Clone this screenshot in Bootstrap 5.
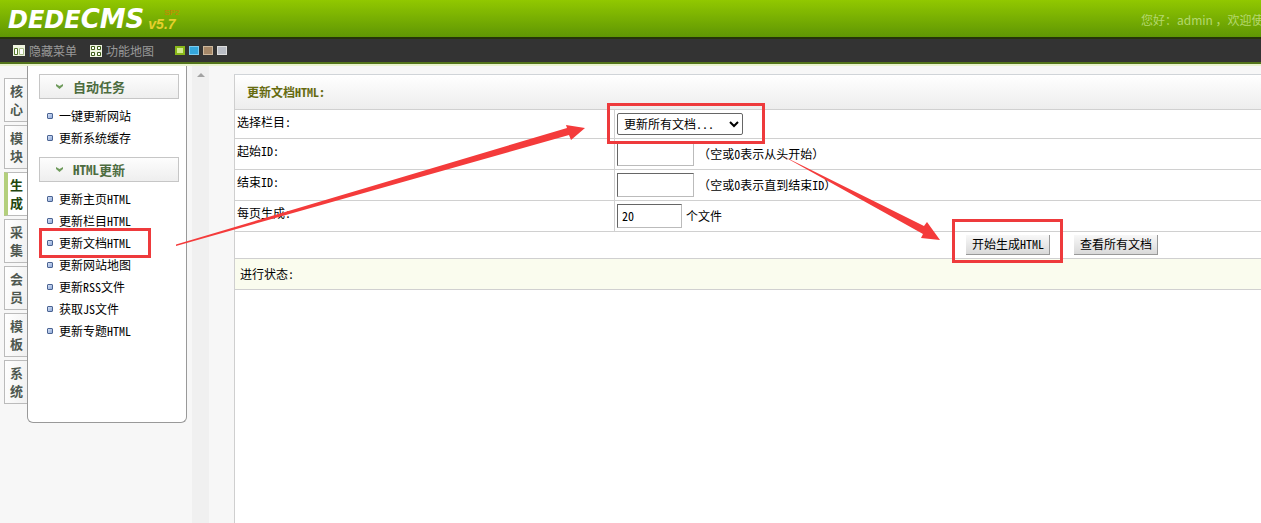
<!DOCTYPE html>
<html lang="zh-CN">
<head>
<meta charset="utf-8">
<meta name="viewport" content="width=device-width, initial-scale=1">
<title>DedeCMS - 更新文档HTML</title>
<link href="https://cdn.jsdelivr.net/npm/bootstrap@5.3.0/dist/css/bootstrap.min.css" rel="stylesheet">
<style>
body{font-family:"Noto Sans CJK SC",sans-serif;font-size:12px;line-height:18px;color:#000;background:#f7f7f7;font-feature-settings:"hwid";overflow:hidden}
button,input,select{font-feature-settings:inherit}
a{color:inherit;text-decoration:none}
.topbar{height:37px;background:linear-gradient(#91c800,#5f9604);padding-left:8px}
.brandmark{font-family:"DejaVu Sans",sans-serif;font-weight:700;font-style:italic;font-size:24px;line-height:38px;color:#fff;font-feature-settings:normal}
.brandmark b{font-size:26px}
.version{font-family:"Liberation Sans",sans-serif;font-weight:700;font-style:italic;font-size:14px;line-height:14px;color:#e6d02e;margin-left:4px;padding-top:8px;font-feature-settings:normal}
.version small{font-weight:400;font-style:normal;font-size:8px;line-height:9px;color:#d17c0a;padding-left:16px}
.greeting{width:120px;line-height:39px;color:#b5d86f;font-feature-settings:normal}
.toolstrip{height:27px;background:#333;border-top:2px solid #25330b;border-bottom:2px solid #53751b;padding-left:13px;color:#999;gap:13px}
.swatch{width:10px;height:9px;border:1px solid #ddd}
.glowline{height:2px;background:#eaf3cf}
.tabs{width:23px;margin-left:4px;padding-top:12px;gap:3px}
.tabs a{height:44px;border:1px solid #bbb;border-right:0;background:linear-gradient(100deg,#fff,#f0f0f0);font-size:13px;font-weight:700;color:#4f5850;padding:3px 5px 0 5px;text-align:center;word-break:break-all}
.tabs a.active{border-left:4px solid #b3cf7c;padding-left:2px;background:#fff;color:#22460d}
.menu{width:160px;height:357px;border:1px solid #999;border-top:0;border-radius:0 0 6px 6px;background:#fff;padding:8px 7px 0 11px}
.menu h2{height:25px;margin:0;border:1px solid #c6c6c6;background:linear-gradient(#fdfdfd,#eee);font-size:13px;line-height:22px;font-weight:700;color:#4d6c3f;padding-left:16px;gap:10px}
.menu ul{margin:0;padding:6px 0 8px 8px}
.menu li{height:22px;gap:6px}
.bullet{width:6px;height:6px;border:1px solid #4b6493;border-radius:1px;background:linear-gradient(135deg,#d8e3f6,#8fa9d8)}
.scrolltrack{width:17px;margin-left:5px;background:#f0f0f0;padding-top:7px}
.workspace{margin-left:25px;margin-top:8px;background:#fff;border-left:1px solid #cfcfcf;border-top:1px solid #d0d4d8}
.formgrid{width:100%;table-layout:fixed;border-collapse:collapse}
.caption-col{width:37%}
.formgrid th,.formgrid td{height:31px;border-bottom:1px solid #d0d0d0;padding:0 2px;font-weight:400}
.formgrid thead th{height:34px;background:linear-gradient(#fff,#ededed);font-weight:700;color:#666b10;padding-left:12px}
.formgrid th.caption{border-right:1px solid #d0d0d0;padding-bottom:6px}
.formgrid .pick th,.formgrid .pick td{height:29px}
.formgrid .pick th.caption{padding-bottom:3px}
.field{width:77px;height:24px;border:1px solid #bbb;border-top-color:#666;border-left-color:#666;padding:0 4px;font-size:12px}
.field-sm{width:65px}
.fullparen{font-feature-settings:normal}
.picker{width:126px;height:22px;border:1px solid #666;border-radius:2px;padding:0 2px;background:#fff;color:#000;font-size:12px}
.formgrid .actions td{height:27px;padding-right:10%}
.pushbtn{width:84px;height:20px;border:0;border-right:1px solid #999;border-bottom:1px solid #999;background:linear-gradient(#f8f8f8,#d9d9d9);padding:0;font-size:12px;line-height:18px;color:#000}
.formgrid .status td{background:#fafcee;padding-left:5px}
.marks{left:0;top:0;pointer-events:none}
</style>
<script src="https://cdn.jsdelivr.net/npm/bootstrap@5.3.0/dist/js/bootstrap.bundle.min.js"></script>
</head>
<body class="d-flex flex-column vh-100 position-relative">
<header>
  <div class="topbar d-flex justify-content-between">
    <a href="#" class="d-flex"><span class="brandmark">DEDE<b>CMS</b></span><span class="version d-flex flex-column"><small>SP2</small>v5.7</span></a>
    <div class="greeting text-nowrap overflow-hidden">您好：admin ，欢迎使</div>
  </div>
  <nav class="toolstrip d-flex align-items-center text-nowrap">
    <a href="#" class="d-flex align-items-center gap-1">
      <svg width="12" height="11" viewBox="0 0 12 11"><rect width="12" height="11" fill="#eef3df"/><path d="M1.500 3.500h3v6h-3z" fill="#fff" stroke="#55772b"/><path d="M6.500 3.500h4v6h-4z" fill="#fff" stroke="#a9bf8a"/></svg>
      隐藏菜单</a>
    <a href="#" class="d-flex align-items-center gap-1">
      <svg width="12" height="12" viewBox="0 0 12 12"><rect width="12" height="12" fill="#eef3df"/><path d="M1.500 1.500h3v3h-3zM7.500 1.500h3v3h-3zM1.500 7.500h3v3h-3zM7.500 7.500h3v3h-3z" fill="#fff" stroke="#3f5d19"/></svg>
      功能地图</a>
    <div class="d-flex gap-1 ms-2">
      <a href="#" aria-label="绿色" class="swatch" style="background:#d3ec8f;border:2px solid #8ab81a"></a>
      <a href="#" aria-label="蓝色" class="swatch" style="background:#35a7dc;border-color:#7cccf0"></a>
      <a href="#" aria-label="棕色" class="swatch" style="background:#a58768;border-color:#cdb79c"></a>
      <a href="#" aria-label="灰色" class="swatch" style="background:#b8bcc4"></a>
    </div>
  </nav>
  <div class="glowline"></div>
</header>
<main class="d-flex flex-grow-1">
  <nav class="tabs d-flex flex-column">
    <a href="#">核心</a><a href="#">模块</a><a href="#" class="active">生成</a><a href="#">采集</a><a href="#">会员</a><a href="#">模板</a><a href="#">系统</a>
  </nav>
  <aside class="menu flex-shrink-0">
    <h2 class="d-flex align-items-center"><svg width="7" height="5" viewBox="0 0 7 5"><path d="M0 0l3.500 2 3.500-2v2L3.500 5 0 2z" fill="#6f9b5c"/></svg>自动任务</h2>
    <ul class="list-unstyled">
      <li class="d-flex align-items-center"><i class="bullet"></i><a href="#">一键更新网站</a></li>
      <li class="d-flex align-items-center"><i class="bullet"></i><a href="#">更新系统缓存</a></li>
    </ul>
    <h2 class="d-flex align-items-center"><svg width="7" height="5" viewBox="0 0 7 5"><path d="M0 0l3.500 2 3.500-2v2L3.500 5 0 2z" fill="#6f9b5c"/></svg>HTML更新</h2>
    <ul class="list-unstyled">
      <li class="d-flex align-items-center"><i class="bullet"></i><a href="#">更新主页HTML</a></li>
      <li class="d-flex align-items-center"><i class="bullet"></i><a href="#">更新栏目HTML</a></li>
      <li class="d-flex align-items-center"><i class="bullet"></i><a href="#">更新文档HTML</a></li>
      <li class="d-flex align-items-center"><i class="bullet"></i><a href="#">更新网站地图</a></li>
      <li class="d-flex align-items-center"><i class="bullet"></i><a href="#">更新RSS文件</a></li>
      <li class="d-flex align-items-center"><i class="bullet"></i><a href="#">获取JS文件</a></li>
      <li class="d-flex align-items-center"><i class="bullet"></i><a href="#">更新专题HTML</a></li>
    </ul>
  </aside>
  <div class="scrolltrack flex-shrink-0 d-flex justify-content-center"><svg width="8" height="4" viewBox="0 0 8 4"><path d="M0 4l4-4 4 4z" fill="#a3a3a3"/></svg></div>
  <form class="workspace flex-grow-1">
    <table class="formgrid">
      <colgroup><col class="caption-col"><col></colgroup>
      <thead><tr><th colspan="2">更新文档HTML:</th></tr></thead>
      <tbody>
        <tr class="pick"><th class="caption"><label for="typeid">选择栏目:</label></th><td><select id="typeid" class="picker d-block"><option>更新所有文档...</option></select></td></tr>
        <tr><th class="caption"><label for="startid">起始ID:</label></th><td><div class="d-flex align-items-center gap-1"><input id="startid" type="text" class="field"><span><span class="fullparen">（</span>空或0表示从头开始<span class="fullparen">）</span></span></div></td></tr>
        <tr><th class="caption"><label for="endid">结束ID:</label></th><td><div class="d-flex align-items-center gap-1"><input id="endid" type="text" class="field"><span><span class="fullparen">（</span>空或0表示直到结束ID<span class="fullparen">）</span></span></div></td></tr>
        <tr><th class="caption"><label for="pagesize">每页生成:</label></th><td><div class="d-flex align-items-center gap-1"><input id="pagesize" type="text" value="20" class="field field-sm"><span>个文件</span></div></td></tr>
        <tr class="actions"><td colspan="2"><div class="d-flex justify-content-end gap-4"><button type="button" class="pushbtn">开始生成HTML</button><button type="button" class="pushbtn">查看所有文档</button></div></td></tr>
        <tr class="status"><td colspan="2">进行状态:</td></tr>
      </tbody>
    </table>
  </form>
</main>
<svg class="marks position-absolute" width="1261" height="523" viewBox="0 0 1261 523" aria-hidden="true">
  <g fill="none" stroke="#ee3a3c" stroke-width="3"><path d="M40.500 229.500h109v27h-109zM608.500 104.500h155v38h-155zM953.500 220.500h108v41h-108z"/></g>
  <path d="M176 244.500L567 128l-1-3 19 3-14 12-2-5L176 246zM781 155L924 226l3-4 13 18-19-2 2-4z" fill="#f43b3b"/>
</svg>
</body>
</html>
